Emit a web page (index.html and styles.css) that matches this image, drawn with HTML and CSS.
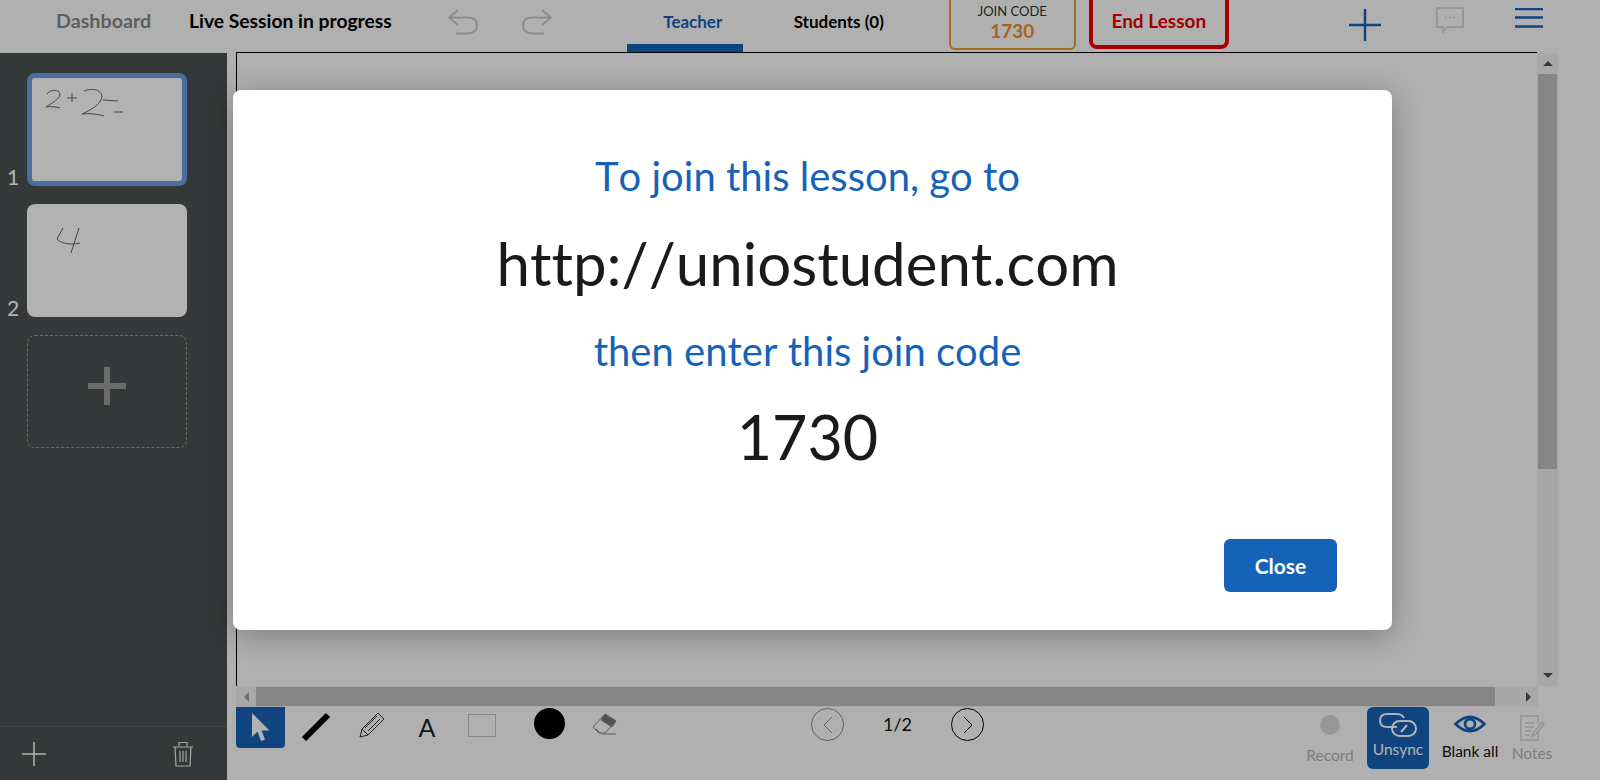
FILE: index.html
```html
<!DOCTYPE html>
<html lang="en">
<head>
  <meta charset="UTF-8" />
  <title>Live Session</title>
  <link rel="stylesheet" href="styles.css">
</head>
<body>
<div class="app">
  <header class="topbar">
    <a class="dash-link">Dashboard</a>
    <span class="session">Live Session in progress</span>
    <svg class="undo-icon" width="32" height="26" viewBox="0 0 32 26"><path d="M11 1 2 8.500 11 16M2 8.500H20Q30 8.500 30 16.500T20 24.500H9" /></svg>
    <svg class="redo-icon" width="32" height="26" viewBox="0 0 32 26"><path d="M21 1 30 8.500 21 16M30 8.500H12Q2 8.500 2 16.500T12 24.500H23" /></svg>
    <nav class="tabs">
      <a class="tab active">Teacher</a>
      <a class="tab">Students (0)</a>
    </nav>
    <div class="join-box">
      <span class="join-label">JOIN CODE</span>
      <span class="join-code">1730</span>
    </div>
    <button class="end-btn">End Lesson</button>
    <svg class="plus-icon" width="32" height="32" viewBox="0 0 32 32"><path d="M16 0V32M0 16H32" /></svg>
    <svg class="chat-icon" width="28" height="26" viewBox="0 0 28 26"><path d="M1 1H27V20H11L7 25V20H1Z" /><path class="dots" d="M9 10.500h2M13 10.500h2M17 10.500h2" /></svg>
    <svg class="menu-icon" width="28" height="20" viewBox="0 0 28 20"><path d="M0 1H28M0 9.500H28M0 18.500H28" /></svg>
  </header>

  <div class="main">
    <aside class="sidebar">
      <div class="slides">
        <div class="slide-row">
          <span class="slide-num">1</span>
          <div class="thumb current">
            <svg viewBox="5 5 150 103" width="150" height="103"><path d="M20 21C24 16 32 16 33 21 33 26 25 30 19 34 23 33 29 34 33 35M40 25H50M45 20V29M57 18C64 15 74 16 75 23 75 30 66 36 55 41 62 40 70 41 77 43M76 27 91 28M87 39 96 39" /></svg>
          </div>
        </div>
        <div class="slide-row">
          <span class="slide-num">2</span>
          <div class="thumb">
            <svg viewBox="0 0 160 113" width="160" height="113"><path d="M36 24 30 35C35 40 44 41 53 39M52 24 44 49" /></svg>
          </div>
        </div>
        <div class="slide-row">
          <div class="thumb add"><span class="add-plus"></span></div>
        </div>
      </div>
      <div class="side-foot">
        <svg class="foot-plus" width="24" height="24" viewBox="0 0 24 24"><path d="M12 0V24M0 12H24" /></svg>
        <svg class="foot-trash" width="22" height="26" viewBox="0 0 22 26"><path d="M1 6H21M7 5V1.500H15V5M3 6 4 25H18L19 6M8 10V21M11 10V21M14 10V21" /></svg>
      </div>
    </aside>

    <section class="workspace">
      <div class="canvas-row">
        <div class="canvas"></div>
        <div class="vscroll">
          <span class="arrow up"></span>
          <span class="vthumb"></span>
          <span class="arrow down"></span>
        </div>
      </div>
      <div class="hscroll">
        <span class="arrow left"></span>
        <span class="hthumb"></span>
        <span class="arrow right"></span>
      </div>
      <div class="toolbar">
        <div class="tools">
          <button class="tool selected">
            <svg width="20" height="32" viewBox="0 0 20 32"><path d="M1 1V25L6.500 19.500 10 29 14 27.500 10.500 18.500H18.500Z" /></svg>
          </button>
          <svg class="tool-line" width="30" height="30" viewBox="0 0 30 30"><path d="M3 27 27 3" /></svg>
          <svg class="tool-pencil" width="26" height="26" viewBox="0 0 26 26"><path d="M1 25 3 17 19 1 25 7 9 23ZM3 17 9 23M6 16 18 4M9 19 21 7" /></svg>
          <span class="tool-text">A</span>
          <span class="tool-rect"></span>
          <span class="tool-color"></span>
          <svg class="tool-eraser" width="26" height="24" viewBox="0 0 26 24"><path class="fill" d="M14 2 25 9 21 15 10 8Z" /><path d="M14 2 2 15 8 21H14L25 9ZM5 17 10 22M11 22H25" /></svg>
        </div>
        <div class="pager">
          <span class="page-btn off"><svg width="12" height="20" viewBox="0 0 12 20"><path d="M10 2 2 10 10 18" /></svg></span>
          <span class="page-num">1/2</span>
          <span class="page-btn"><svg width="12" height="20" viewBox="0 0 12 20"><path d="M2 2 10 10 2 18" /></svg></span>
        </div>
        <div class="actions">
          <div class="action faded">
            <span class="rec-dot"></span>
            <span class="action-label">Record</span>
          </div>
          <div class="action sync">
            <svg width="40" height="26" viewBox="0 0 40 26"><path d="M19 15H9Q2 15 2 8.500T9 2H19Q24 2 26 6" /><rect x="14" y="9" width="24" height="15" rx="7.500" /><path d="M23 20 29 13" /></svg>
            <span class="action-label">Unsync</span>
          </div>
          <div class="action blank">
            <svg width="34" height="18" viewBox="0 0 36 20"><path d="M2 10Q18 -6 34 10 18 26 2 10Z" /><circle cx="18" cy="10" r="5.500" /></svg>
            <span class="action-label">Blank all</span>
          </div>
          <div class="action faded notes">
            <svg width="26" height="26" viewBox="0 0 26 26"><path d="M19 8V1H2V25H19V16M6 8H15M6 12H15M6 16H12M6 20H11M14 18 23 7 25 9 16 20 13 21Z" /></svg>
            <span class="action-label">Notes</span>
          </div>
        </div>
      </div>
    </section>
  </div>
</div>

<div class="overlay">
  <div class="modal">
    <div class="modal-body">
      <p class="modal-line">To join this lesson, go to</p>
      <p class="modal-big url">http://uniostudent.com</p>
      <p class="modal-line">then enter this join code</p>
      <p class="modal-big code">1730</p>
    </div>
    <div class="modal-foot">
      <button class="close-btn">Close</button>
    </div>
  </div>
</div>
</body>
</html>
```

FILE: styles.css
```css
html, body {
  height: 100%;
  margin: 0;
  overflow: hidden;
}

body {
  position: relative;
  background-color: #fdfdfd;
  font-family: Lato, "Liberation Sans", sans-serif;
  color: #000;
}

svg {
  display: block;
  fill: none;
}

.app {
  height: 780px;
  display: flex;
  flex-direction: column;
}

/* top bar */
.topbar {
  height: 52px;
  display: flex;
  align-items: flex-start;
  flex-shrink: 0;
}

.dash-link {
  width: 96px;
  margin: 9px 0 0 56px;
  font-size: 19.700px;
  font-weight: 700;
  color: #888;
}

.session {
  margin: 9px 0 0 37px;
  font-size: 19.300px;
  font-weight: 700;
  color: #000;
}

.undo-icon, .redo-icon {
  margin-top: 9px;
  stroke: #c8c8c8;
  stroke-width: 2;
}

.undo-icon { margin-left: 55px; }
.redo-icon { margin-left: 42px; }

.tabs {
  display: flex;
  margin-left: 74px;
}

.tab {
  width: 116px;
  height: 44px;
  line-height: 44px;
  text-align: center;
  font-size: 17px;
  font-weight: 700;
}

.tab.active {
  box-sizing: content-box;
  width: 100px;
  padding-left: 16px;
  color: #1662b8;
  border-bottom: 8px solid #1662b8;
}

.tab + .tab { margin-left: 36px; width: 120px; }

.join-box {
  width: 127px;
  height: 50px;
  margin-left: 50px;
  box-sizing: border-box;
  border: 2px solid #f09a2c;
  border-top: none;
  border-radius: 0 0 6px 6px;
  display: flex;
  flex-direction: column;
  align-items: center;
  padding-top: 4px;
}

.join-label {
  font-size: 13px;
  line-height: 15px;
  color: #333;
}

.join-code {
  font-size: 19px;
  line-height: 23px;
  font-weight: 700;
  color: #f0902a;
}

.end-btn {
  width: 140px;
  height: 49px;
  margin-left: 13px;
  padding: 0 0 4px;
  background: none;
  border: 4px solid #f00000;
  border-top: none;
  border-radius: 0 0 8px 8px;
  font-family: inherit;
  font-size: 19px;
  font-weight: 700;
  color: #e60000;
}

.plus-icon {
  margin: 9px 0 0 120px;
  stroke: #1662b8;
  stroke-width: 2.500;
}

.chat-icon {
  margin: 7px 0 0 55px;
  stroke: #d8d8d8;
  stroke-width: 2;
}

.chat-icon .dots { stroke-width: 1.500; }

.menu-icon {
  margin: 8px 0 0 51px;
  stroke: #1662b8;
  stroke-width: 2.500;
}

/* left column + work area */
.main {
  flex: 1;
  display: flex;
  min-height: 0;
}

.sidebar {
  width: 227px;
  margin-top: 1px;
  display: flex;
  flex-direction: column;
  justify-content: space-between;
  background-color: #4c5151;
}

.slides {
  display: flex;
  flex-direction: column;
  gap: 18px;
  padding: 20px 0 0 27px;
}

.slide-row {
  position: relative;
}

.slide-num {
  position: absolute;
  left: -20px;
  bottom: -3px;
  font-size: 21px;
  line-height: 24px;
  color: #fff;
}

.thumb {
  width: 160px;
  height: 113px;
  box-sizing: border-box;
  background-color: #fff;
  border-radius: 8px;
}

.thumb path {
  stroke: #666;
  stroke-width: 1;
}

.thumb.current {
  border: 5px solid #6a9fe3;
  border-radius: 8px;
}

.thumb.add {
  padding-bottom: 11px;
  background: none;
  border: 1px dashed #9a9a9a;
  display: flex;
  align-items: center;
  justify-content: center;
}

.add-plus {
  width: 38px;
  height: 38px;
  background:
    linear-gradient(#9a9a9a, #9a9a9a) center / 38px 6px no-repeat,
    linear-gradient(#9a9a9a, #9a9a9a) center / 6px 38px no-repeat;
}

.side-foot {
  height: 53px;
  border-top: 1px solid #5c6161;
  display: flex;
  align-items: center;
  justify-content: space-between;
  padding: 0 33px 0 22px;
}

.foot-plus {
  stroke: #fff;
  stroke-width: 1.500;
}

.foot-trash {
  stroke: #eee;
  stroke-width: 1.200;
}

.workspace {
  flex: 1;
  min-width: 0;
  display: flex;
  flex-direction: column;
  padding-left: 9px;
}

.canvas-row {
  display: flex;
  height: 634px;
}

.canvas {
  width: 1301px;
  border-top: 1px solid #000;
  border-left: 1px solid #000;
  box-sizing: border-box;
}

.vscroll {
  width: 21px;
  margin-top: 1px;
  background-color: #f1f1f1;
  display: flex;
  flex-direction: column;
  align-items: center;
}

.vthumb {
  width: 19px;
  height: 395px;
  background-color: #c1c1c1;
}

.arrow {
  display: block;
  width: 0;
  height: 0;
  border: 5px solid transparent;
  flex-shrink: 0;
}

.arrow.up {
  border-top: none;
  border-bottom-color: #505050;
  margin: 8px 0;
}

.arrow.down {
  border-bottom: none;
  border-top-color: #505050;
  margin: auto 0 8px;
}

.hscroll {
  width: 1302px;
  height: 21px;
  display: flex;
  align-items: center;
  background-color: #f1f1f1;
}

.hthumb {
  width: 1239px;
  height: 19px;
  background-color: #c1c1c1;
  margin-left: 7px;
}

.arrow.left {
  border-left: none;
  border-right-color: #a0a0a0;
  margin-left: 8px;
}

.arrow.right {
  border-right: none;
  border-left-color: #505050;
  margin-left: 31px;
}

/* bottom tools */
.toolbar {
  flex: 1;
  display: flex;
  position: relative;
}

.tools {
  display: flex;
  align-items: flex-start;
}

.tool {
  width: 49px;
  height: 41px;
  padding: 0;
  display: flex;
  align-items: center;
  justify-content: center;
  background-color: #1662b8;
  border: none;
  border-radius: 0 0 4px 4px;
}

.tool svg {
  fill: #fff;
}

.tool-line {
  margin: 5px 0 0 16px;
  stroke: #000;
  stroke-width: 6;
}

.tool-pencil {
  margin: 5px 0 0 28px;
  stroke: #333;
  stroke-width: 1;
}

.tool-text {
  width: 22px;
  margin: 5px 0 0 31px;
  font-size: 25px;
  line-height: 30px;
  text-align: center;
  color: #222;
}

.tool-rect {
  width: 28px;
  height: 23px;
  margin: 7px 0 0 30px;
  border: 1px solid #c4c4c4;
  box-sizing: border-box;
}

.tool-color {
  width: 31px;
  height: 31px;
  margin: 1px 0 0 38px;
  border-radius: 50%;
  background-color: #000;
}

.tool-eraser {
  margin: 5px 0 0 26px;
  stroke: #888;
  stroke-width: 1;
}

.tool-eraser .fill {
  fill: #777;
}

.pager {
  display: flex;
  align-items: flex-start;
  margin-left: 194px;
}

.page-btn {
  width: 33px;
  height: 33px;
  margin-top: 1px;
  box-sizing: border-box;
  border: 1.500px solid #000;
  border-radius: 50%;
  display: flex;
  align-items: center;
  justify-content: center;
  stroke: #000;
}

.page-btn.off {
  border-color: #888;
  stroke: #888;
}

.page-num {
  width: 107px;
  text-align: center;
  font-size: 18px;
  line-height: 34px;
  color: #111;
}

.actions {
  display: flex;
  align-items: flex-start;
  margin-left: 314px;
}

.action {
  display: flex;
  flex-direction: column;
  align-items: center;
  font-size: 15.500px;
  width: 64px;
  height: 62px;
}

.action.faded { color: #b4b4b4; }

.rec-dot {
  width: 20px;
  height: 20px;
  margin: 8px 0 11px;
  border-radius: 50%;
  background-color: #d8d8d8;
}

.action-label { line-height: 18px; }

.action.sync {
  width: 62px;
  margin-left: 5px;
  box-sizing: border-box;
  padding-top: 5px;
  background-color: #1662b8;
  border-radius: 6px;
  color: #fff;
  stroke: #fff;
  stroke-width: 2;
}

.action.sync svg { margin-bottom: 2px; }

.action.blank {
  margin-left: 9px;
  color: #111;
  stroke: #1662b8;
  stroke-width: 3;
}

.action.blank svg { margin: 8px 0 9px; }

.action.notes {
  width: 56px;
  stroke: #d4d4d4;
  stroke-width: 1.500;
  margin-left: 2px;
}

.action.notes svg { margin: 8px 0 3px; }

/* dim + join dialog */
.overlay {
  position: absolute;
  top: 0;
  left: 0;
  right: 0;
  bottom: 0;
  background-color: rgba(0, 0, 0, 0.3);
}

.modal {
  width: 1159px;
  height: 540px;
  margin: 90px 0 0 233px;
  box-sizing: border-box;
  background-color: #fff;
  border-radius: 8px;
  box-shadow: 0 5px 30px rgba(0, 0, 0, 0.3);
  display: flex;
  flex-direction: column;
  justify-content: space-between;
  padding-bottom: 38px;
}

.modal-body {
  padding: 58px 10px 0 0;
  text-align: center;
  font-variant-ligatures: none;
  font-kerning: none;
}

.modal-line {
  margin: 0;
  font-size: 40px;
  line-height: 56px;
  color: #1662b8;
}

.modal-big {
  margin: 0;
  font-size: 60px;
  line-height: 72px;
  color: #1a1a1a;
}

.modal-big.url { margin: 23px 0 24px; }
.modal-big.code { margin-top: 22px; font-size: 61px; }

.modal-foot {
  display: flex;
  justify-content: flex-end;
  padding-right: 55px;
}

.close-btn {
  width: 113px;
  height: 53px;
  padding: 0;
  background-color: #1662b8;
  border: none;
  border-radius: 6px;
  font-family: inherit;
  font-size: 21px;
  font-weight: 700;
  color: #fff;
}
```
